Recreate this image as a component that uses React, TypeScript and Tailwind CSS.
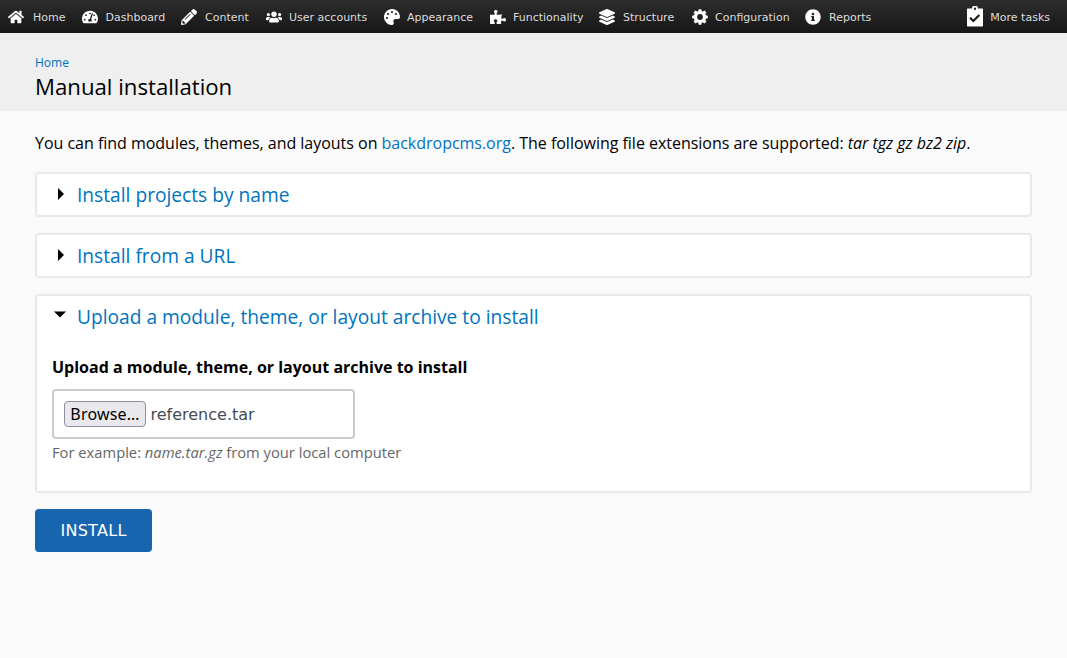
import type { ReactNode } from 'react';
import { FaHome, FaTachometerAlt, FaPencilAlt, FaUsers, FaPalette, FaPuzzlePiece, FaLayerGroup, FaInfoCircle } from 'react-icons/fa';

function GearIcon() {
  const teeth = [0, 45, 90, 135];
  return (
    <svg width="16" height="16" viewBox="0 0 16 16" aria-hidden="true">
      <circle cx="8" cy="8" r="4.5" fill="none" stroke="#fff" strokeWidth="3.2" />
      {teeth.map((angle) => (
        <path
          key={angle}
          fill="#fff"
          transform={`rotate(${angle} 8 8)`}
          d="M6.7 .2H9.3L9.9 3H6.1ZM6.1 13H9.9L9.3 15.8H6.7Z"
        />
      ))}
    </svg>
  );
}

function TaskIcon() {
  return (
    <svg width="16" height="21" viewBox="0 0 16 21" aria-hidden="true">
      <path
        fill="#fff"
        fillRule="evenodd"
        d="M0.5 2.5H5A3 3 0 0 1 11 2.5H15.5L16 3V20L15.5 20.5H.5L0 20V3ZM8 1.6A1.2 1.2 0 1 0 8 4A1.2 1.2 0 1 0 8 1.6Z"
      />
      <path d="M3 11.8L6.3 15L12.3 9" fill="none" stroke="#1c1c1c" strokeWidth="2.2" />
    </svg>
  );
}

const menu: { label: string; icon: ReactNode; size: string }[] = [
  { label: 'Home', icon: <FaHome size={16} />, size: 'w-[74px] gap-[9px]' },
  { label: 'Dashboard', icon: <FaTachometerAlt size={16} />, size: 'w-[99px] gap-[7.5px]' },
  { label: 'Content', icon: <FaPencilAlt size={16} />, size: 'w-[85px] gap-2' },
  { label: 'User accounts', icon: <FaUsers size={16} />, size: 'w-[118px] gap-[7px]' },
  { label: 'Appearance', icon: <FaPalette size={16} />, size: 'w-[106px] gap-[7px]' },
  { label: 'Functionality', icon: <FaPuzzlePiece size={16} />, size: 'w-[109px] gap-[7px]' },
  { label: 'Structure', icon: <FaLayerGroup size={16} />, size: 'w-[92.5px] gap-2' },
  { label: 'Configuration', icon: <GearIcon />, size: 'w-[113.5px] gap-[7.5px]' },
  { label: 'Reports', icon: <FaInfoCircle size={16} />, size: 'gap-2' },
];

function Panel({ title, open, children }: { title: string; open?: boolean; children?: ReactNode }) {
  return (
    <section className={`rounded-[4px] border-2 border-[#e9e9e9] bg-white ${open ? 'h-[199px]' : 'h-[45px]'}`}>
      <h2 className="flex h-[41px] items-center pl-[15px] text-[19.18px] text-[#0074bd]">
        <svg width="16" height="16" viewBox="0 0 16 16" className="mr-[9px] shrink-0" aria-hidden="true">
          {open ? <path d="M2 2.5H14L8 8.5Z" /> : <path d="M6 1L12 7L6 13Z" />}
        </svg>
        <a href="#" className="pt-[2px]">{title}</a>
      </h2>
      {children}
    </section>
  );
}

export default function App() {
  return (
    <div className="min-h-screen bg-[#fafafa] font-['Open_Sans',sans-serif] text-black">
      <nav className="flex h-[33px] items-center bg-linear-to-b from-[#2d2d2d] to-[#171717] pr-[17px] pl-2 font-['DejaVu_Sans',sans-serif] text-[11px] text-[#ddd]">
        <ul className="flex items-center">
          {menu.map(({ label, icon, size }) => (
            <li key={label} className={`flex items-center whitespace-nowrap ${size}`}>
              <span className="shrink-0 text-white">{icon}</span>
              <span className="pt-[3px]">{label}</span>
            </li>
          ))}
        </ul>
        <a href="#" className="ml-auto flex items-center gap-[7px]">
          <TaskIcon />
          <span className="pt-[3px]">More tasks</span>
        </a>
      </nav>
      <header className="h-[78px] bg-[#efefef] px-[35px] pt-[21px]">
        <a href="#" className="block text-[12px] leading-[18px] text-[#0074bd]">Home</a>
        <h1 className="text-[22.2px] leading-[30px]">Manual installation</h1>
      </header>
      <main className="px-[35px] pt-5">
        <p className="text-base tracking-[-0.022px] whitespace-nowrap">
          You can find modules, themes, and layouts on <a href="#" className="text-[#0074bd]">backdropcms.org</a>. The
          following file extensions are supported: <em>tar tgz gz bz2 zip</em>.
        </p>
        <form className="mt-[17px] flex flex-col gap-4">
          <Panel title="Install projects by name" />
          <Panel title="Install from a URL" />
          <Panel title="Upload a module, theme, or layout archive to install" open>
            <div className="px-[15px] pt-[18px]">
              <div className="text-base font-bold">Upload a module, theme, or layout archive to install</div>
              <div className="mt-[10px] flex h-[50px] w-[303px] items-center rounded-[4px] border-2 border-[#ccc] bg-white px-[10px]">
                <button type="button" className="h-[26px] w-[82px] rounded-[4px] border border-[#8f8f9d] bg-[#e9e9ed] font-['Noto_Sans',sans-serif] text-base leading-none tracking-[0.2px]">
                  Browse…
                </button>
                <span className="ml-[4.5px] pt-[2px] font-['DejaVu_Sans',sans-serif] text-base text-[#444b55]">reference.tar</span>
              </div>
              <p className="mt-[2px] text-[14.74px] leading-[22px] text-[#666]">
                For example: <em>name.tar.gz</em> from your local computer
              </p>
            </div>
          </Panel>
          <button type="button" className="h-[43px] w-[117px] rounded-[4px] bg-[#1865af] font-['DejaVu_Sans',sans-serif] text-base tracking-[0.3px] text-white">
            INSTALL
          </button>
        </form>
      </main>
    </div>
  );
}
